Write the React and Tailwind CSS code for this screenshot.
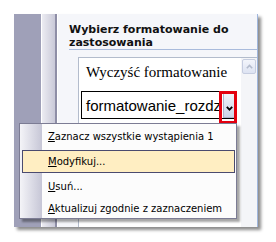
export default function App() {
  // Word task pane "Style i formatowanie" with the context menu of a style opened
  return (
    <div className="h-[242px] w-[276px] bg-white pl-[14px] pt-[14px]">
      <div className="relative flex h-[213px] w-[244px] shadow-[3px_3px_3px_rgba(0,0,0,0.45)]">
        {/* left strip of the Word window behind the task pane */}
        <div className="w-[27px] bg-[#9fa0b8]" />
        <div className="w-px bg-white" />
        <div className="w-[13px] bg-gradient-to-r from-[#ececf2] to-[#c9c9d8]" />
        <div className="w-[2px] bg-[#8e8ea6]" />
        <div className="w-px bg-white" />

        {/* task pane */}
        <div className="flex flex-1 flex-col border-r border-[#9fb6dd] bg-[#f5f6fa] pl-[11px] pt-[9px]">
          <h2 className="border-b border-[#a9bbdc] font-['DejaVu_Sans',sans-serif] text-[11px] font-bold leading-[13px] text-[#111]">
            Wybierz formatowanie do zastosowania
          </h2>

          <div className="ml-[9px] mt-[7px] flex flex-1 border-l border-t border-[#b3bccc] bg-white">
            <div className="flex-1">
              <div className="pl-[7px] pt-[6px] font-['Liberation_Serif',serif] text-[15px] leading-[17px] text-black">
                Wyczyść formatowanie
              </div>
              <div className="ml-[2px] mt-[10px] flex h-[28px] w-[156px] border border-black">
                <span className="flex-1 self-center overflow-hidden whitespace-nowrap pl-[4px] font-['Liberation_Sans',sans-serif] text-[15px] leading-[17px] text-black">
                  formatowanie_rozdz
                </span>
                <div className="flex w-[13px] items-end justify-center border border-[#aab4cc] bg-gradient-to-b from-[#f2f4fa] to-[#ccd4e8] pb-[6px]">
                  <svg width="7" height="5" viewBox="0 0 7 5">
                    <path d="M0.8 0.8 L3.5 3.6 L6.2 0.8" fill="none" stroke="#000" strokeWidth="1.8" />
                  </svg>
                </div>
              </div>
            </div>

            {/* scrollbar */}
            <div className="w-[16px] bg-[#f4f5f8] pl-px pt-px">
              <div className="flex h-[15px] w-[14px] items-center justify-center rounded-[2px] border border-[#c6cde0] bg-gradient-to-b from-[#f3f5fb] to-[#dde3f2]">
                <svg width="7" height="5" viewBox="0 0 7 5">
                  <path d="M0.8 4.2 L3.5 1.4 L6.2 4.2" fill="none" stroke="#b3bbcc" strokeWidth="1.6" />
                </svg>
              </div>
            </div>
          </div>
        </div>

        {/* red marker round the dropdown button */}
        <div className="absolute left-[205px] top-[77px] h-[33px] w-[18px] border-[3px] border-[#e3000f]" />

        {/* context menu */}
        <div className="absolute left-[5px] top-[109px] flex h-[96px] w-[218px] flex-col border border-[#7c7c94] bg-[linear-gradient(to_right,#f4f4f8_0px,#c6c6d6_22px,#fcfcfc_22px)] font-['DejaVu_Sans',sans-serif] text-[10px] text-black shadow-[3px_3px_2px_rgba(0,0,0,0.35)]">
          <div className="flex h-[25px] items-center pl-[28px]">
            <span><u>Z</u>aznacz wszystkie wystąpienia 1</span>
          </div>
          <div className="h-[25px] pt-px">
            <div className="ml-[2px] mr-px flex h-[23px] items-center border border-[#4b4b6f] bg-[#ffeec2] pl-[25px]">
              <span><u>M</u>odyfikuj...</span>
            </div>
          </div>
          <div className="flex h-[25px] items-center pl-[28px]">
            <span><u>U</u>suń...</span>
          </div>
          <div className="flex h-[19px] items-center pl-[28px]">
            <span><u>A</u>ktualizuj zgodnie z zaznaczeniem</span>
          </div>
        </div>
      </div>
    </div>
  );
}
